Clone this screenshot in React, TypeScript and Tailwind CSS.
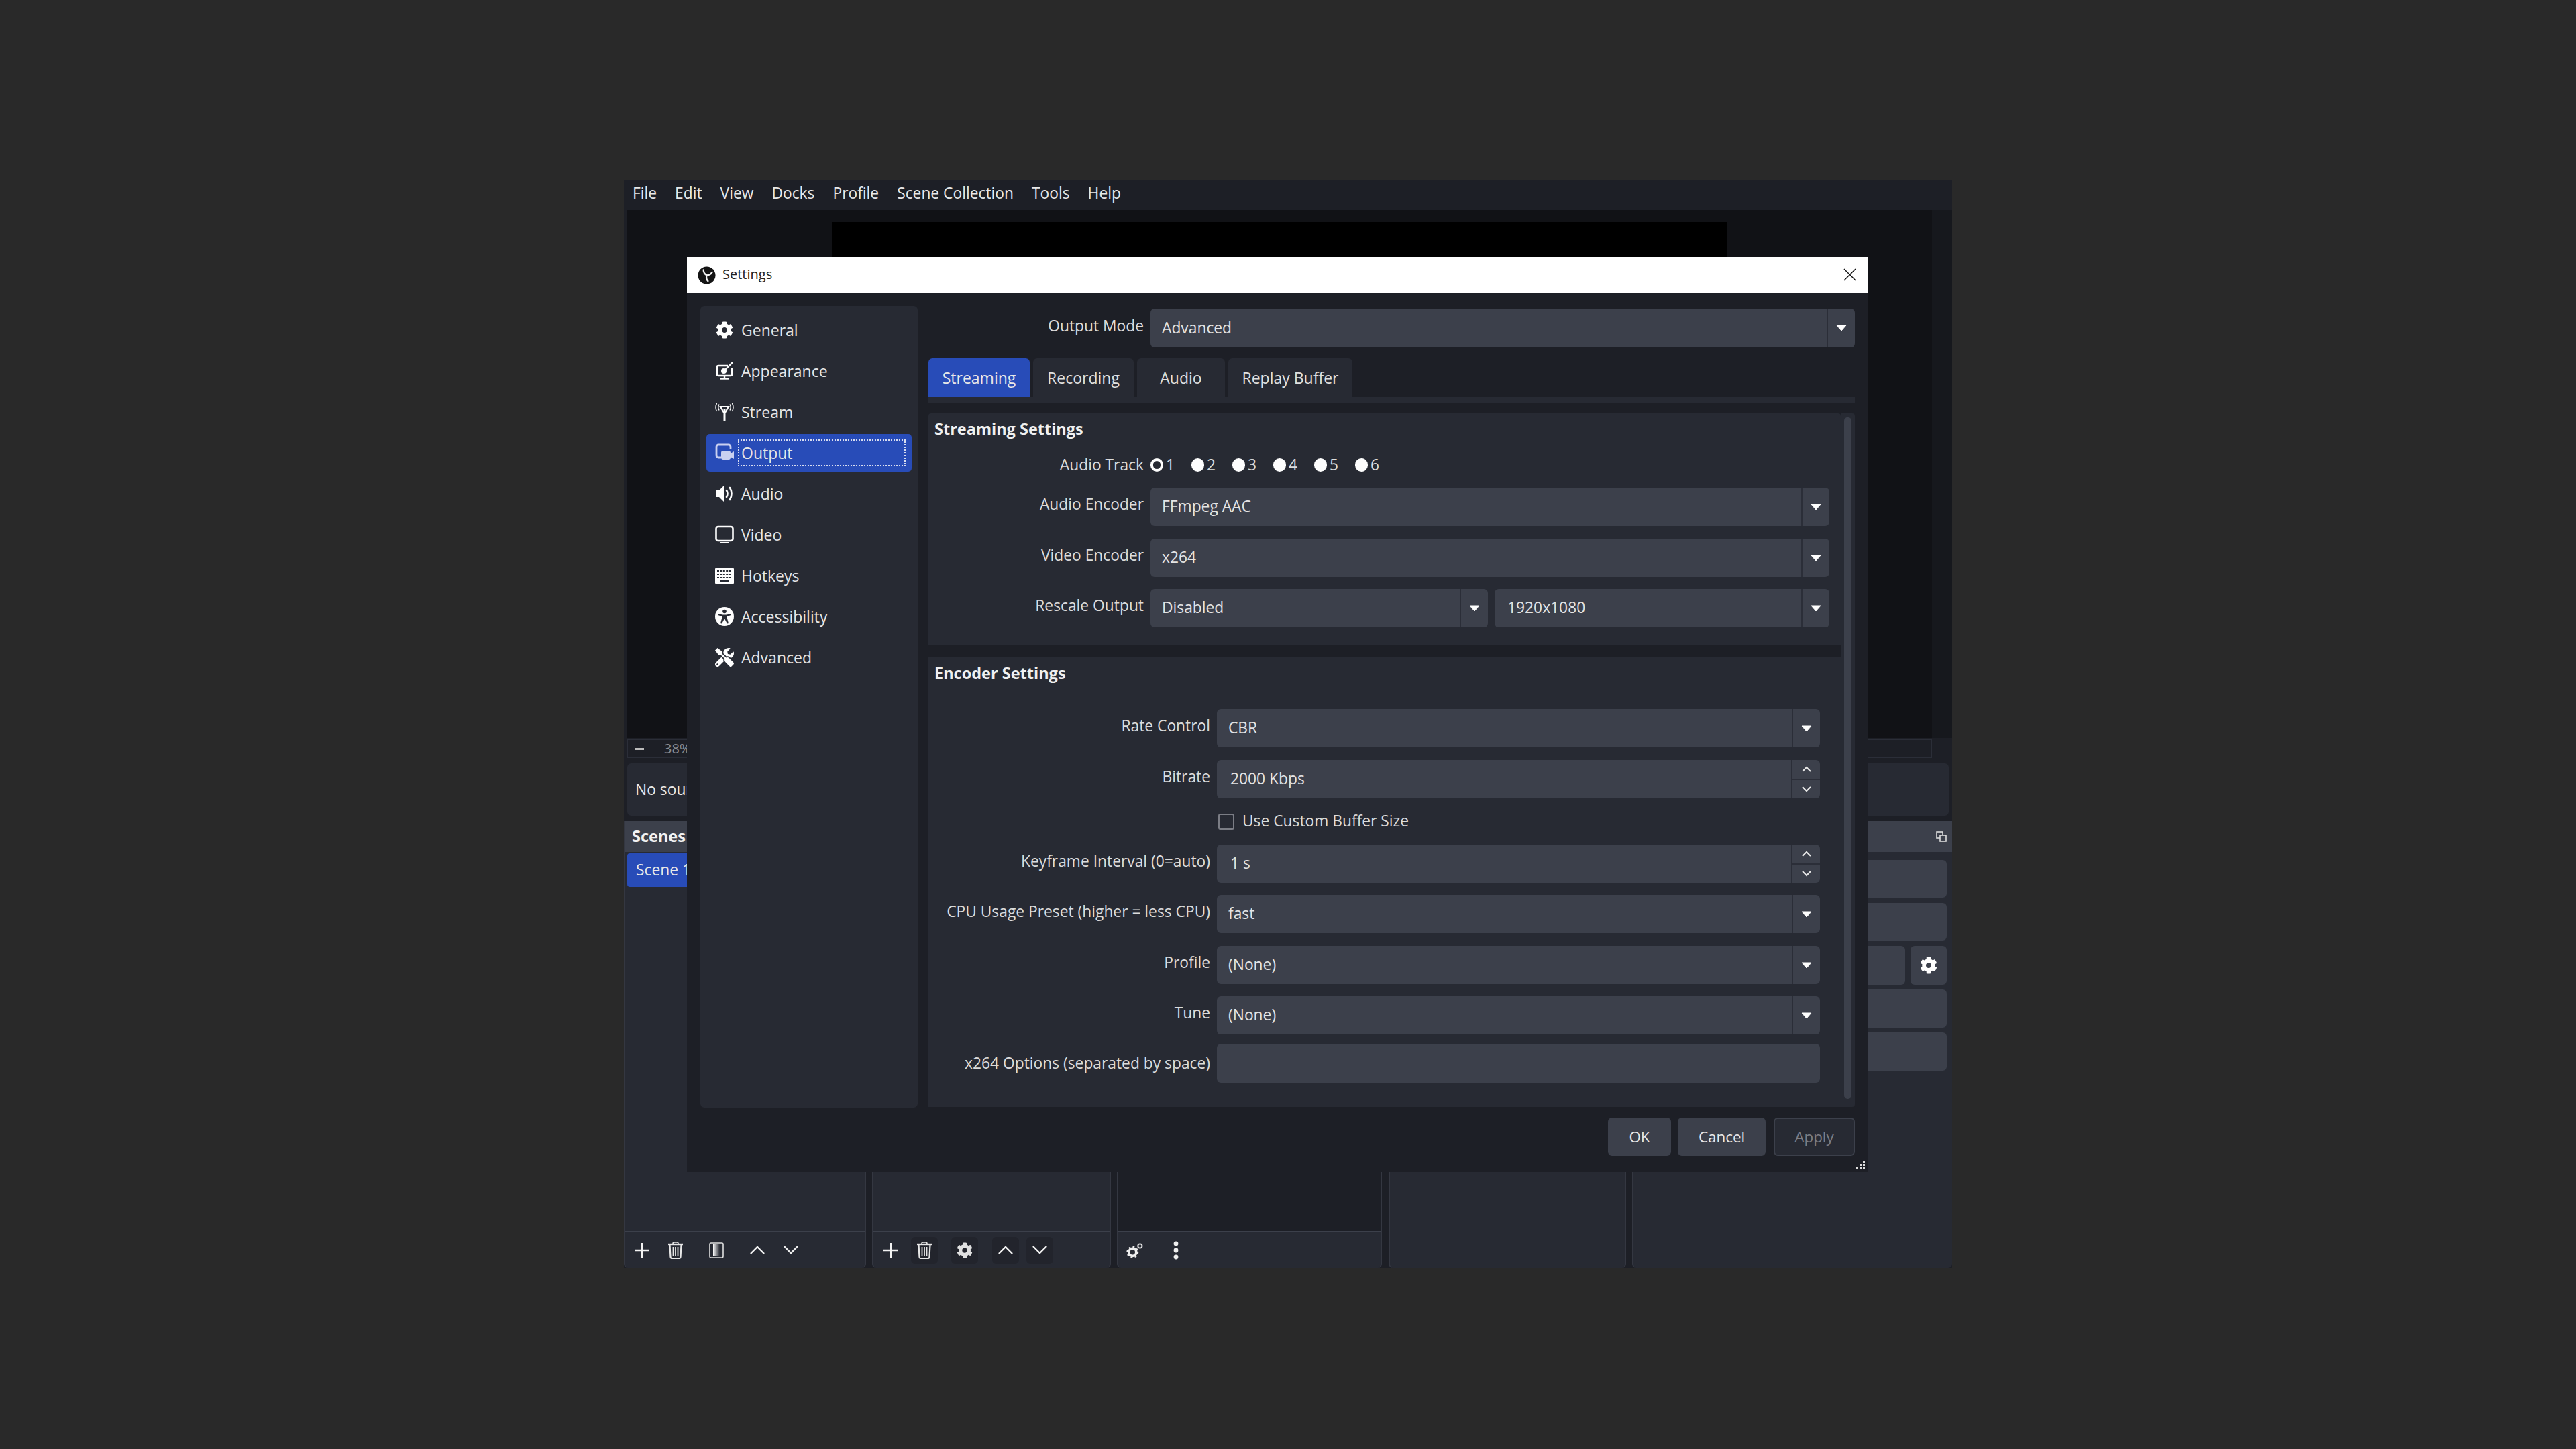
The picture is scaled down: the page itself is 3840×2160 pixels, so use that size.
import React from "react";
import { FaCog, FaTools } from "react-icons/fa";

const Tri = () => (
  <svg width="16" height="10" viewBox="0 0 16 10"><path d="M1 1 H15 L8 9 Z" fill="#fefefe" stroke="#fefefe" strokeLinejoin="round" strokeWidth="1" /></svg>
);

const Combo = ({ text, className = "", pad = "pl-[17px]" }: { text: string; className?: string; pad?: string }) => (
  <div className={`flex items-stretch bg-[#3c404b] rounded-[6px] ${className}`}>
    <div className={`flex-1 flex items-center text-[22.8px] text-[#e4e4e4] ${pad}`}>{text}</div>
    <div className="w-[42px] border-l-2 border-[#2b2e38] flex items-center justify-center"><Tri /></div>
  </div>
);

const Spin = ({ text }: { text: string }) => (
  <div className="flex items-stretch bg-[#3c404b] rounded-[6px] flex-1">
    <div className="flex-1 flex items-center pl-[20px] text-[22.8px] text-[#e4e4e4]">{text}</div>
    <div className="w-[43px] border-l-2 border-[#2b2e38] flex flex-col">
      <div className="flex-1 flex items-center justify-center border-b-2 border-[#2b2e38]">
        <svg width="16" height="10" viewBox="0 0 16 10"><path d="M2 8 L8 2 L14 8" fill="none" stroke="#e8e8e8" strokeWidth="2" /></svg>
      </div>
      <div className="flex-1 flex items-center justify-center">
        <svg width="16" height="10" viewBox="0 0 16 10"><path d="M2 2 L8 8 L14 2" fill="none" stroke="#e8e8e8" strokeWidth="2" /></svg>
      </div>
    </div>
  </div>
);

const Label = ({ text, className = "" }: { text: string; className?: string }) => (
  <div className={`text-right text-[22.8px] text-[#dcdcdc] whitespace-nowrap self-center -mt-[6px] ${className}`}>{text}</div>
);

const Row1 = ({ label, className = "", children }: { label: string; className?: string; children: React.ReactNode }) => (
  <div className={`flex h-[57px] gap-[10px] ${className}`}>
    <Label text={label} className="w-[321px]" />
    {children}
  </div>
);

const Row2 = ({ label, className = "", children }: { label: string; className?: string; children: React.ReactNode }) => (
  <div className={`flex h-[57px] gap-[10px] ${className}`}>
    <Label text={label} className="w-[420px]" />
    {children}
  </div>
);

const ic = "w-[28px] h-[28px] text-[#fefefe]";

const IconAppearance = () => (
  <svg viewBox="0 0 28 28" className={ic}>
    <path d="M19 6 H5 a2 2 0 0 0 -2 2 V19 a2 2 0 0 0 2 2 H23 a2 2 0 0 0 2 -2 V10" fill="none" stroke="currentColor" strokeWidth="2.6" />
    <path d="M26 1 L15 12" stroke="currentColor" strokeWidth="2.4" />
    <circle cx="13" cy="14" r="4" fill="currentColor" />
    <path d="M8 25.5 H20" stroke="currentColor" strokeWidth="2.4" />
    <path d="M14 21 V25" stroke="currentColor" strokeWidth="2.4" />
  </svg>
);
const IconStream = () => (
  <svg viewBox="0 0 28 28" className={ic}>
    <path d="M8 6 H20 L15.5 14 H12.5 Z" fill="none" stroke="currentColor" strokeWidth="2.2" />
    <path d="M14 9 V27" stroke="currentColor" strokeWidth="3" />
    <path d="M6 2.5 Q3.5 7 6 11.5 M2.5 1 Q-0.5 7 2.5 13 M22 2.5 Q24.5 7 22 11.5 M25.5 1 Q28.5 7 25.5 13" fill="none" stroke="currentColor" strokeWidth="1.5" />
  </svg>
);
const IconOutput = () => (
  <svg viewBox="0 0 28 28" className="w-[28px] h-[28px] text-[#c9d0f0]">
    <path d="M9 21 H5 a3 3 0 0 1 -3 -3 V5 a3 3 0 0 1 3 -3 H20 a3 3 0 0 1 3 3 V9" fill="none" stroke="currentColor" strokeWidth="2.8" />
    <rect x="9" y="11" width="14" height="13" rx="3" fill="currentColor" />
    <path d="M23 15 L28 12 V23 L23 20 Z" fill="currentColor" />
  </svg>
);
const IconAudio = () => (
  <svg viewBox="0 0 28 28" className={ic}>
    <path d="M1 9 H6 L13 2 V26 L6 19 H1 Z" fill="currentColor" />
    <path d="M17 9 Q20 14 17 19 M22 5 Q27 14 22 23" fill="none" stroke="currentColor" strokeWidth="2.6" strokeLinecap="round" />
  </svg>
);
const IconVideo = () => (
  <svg viewBox="0 0 28 28" className={ic}>
    <rect x="1.5" y="2" width="25" height="21" rx="3" fill="none" stroke="currentColor" strokeWidth="2.6" />
    <path d="M8 26 H20" stroke="currentColor" strokeWidth="2" />
  </svg>
);
const IconHotkeys = () => (
  <svg viewBox="0 0 28 28" className={ic}>
    <rect x="0" y="3" width="28" height="23" rx="1" fill="currentColor" />
    <path d="M3 7 H25 M3 12 H25 M3 17 H25" stroke="#272a33" strokeWidth="2.2" strokeDasharray="3 1.4" />
    <path d="M7 22 H21" stroke="#272a33" strokeWidth="2.2" />
  </svg>
);
const IconAccess = () => (
  <svg viewBox="0 0 28 28" className={ic}>
    <circle cx="14" cy="14" r="14" fill="currentColor" />
    <circle cx="14" cy="6.5" r="2.8" fill="#272a33" />
    <path d="M5 10 L11 11.5 H17 L23 10 L23.5 12 L18 14 V17 L20 24 L18 24.5 L14.5 18 H13.5 L10 24.5 L8 24 L10 17 V14 L4.5 12 Z" fill="#272a33" />
  </svg>
);
const Logo = () => (
  <svg viewBox="0 0 28 28" className="w-[27px] h-[27px]">
    <circle cx="14" cy="14" r="13.5" fill="#141414" />
    <g fill="none" stroke="#f4f4f4" strokeWidth="2.4" strokeLinecap="round">
      <path d="M14 14 Q9 11 9 5.5" />
      <path d="M14 14 Q19.5 14 22.5 9" />
      <path d="M14 14 Q12.5 19.5 16 23" />
    </g>
  </svg>
);

const navItems: [string, React.ReactNode][] = [
  ["General", <FaCog className="w-[26px] h-[26px] text-[#fefefe]" />],
  ["Appearance", <IconAppearance />],
  ["Stream", <IconStream />],
  ["Output", <IconOutput />],
  ["Audio", <IconAudio />],
  ["Video", <IconVideo />],
  ["Hotkeys", <IconHotkeys />],
  ["Accessibility", <IconAccess />],
  ["Advanced", <FaTools className="w-[28px] h-[28px] text-[#fefefe]" />],
];

const Trash = () => (
  <svg viewBox="0 0 24 26" className="w-[24px] h-[26px]" fill="none" stroke="#e6e6e6">
    <path d="M1 4 H23" strokeWidth="2.4" />
    <path d="M8 3 Q8 1 10 1 H14 Q16 1 16 3" strokeWidth="1.6" />
    <path d="M3.5 5 L4.5 23 Q4.6 25 6.5 25 H17.5 Q19.4 25 19.5 23 L20.5 5" strokeWidth="2.2" />
    <path d="M8.5 8 V21 M12 8 V21 M15.5 8 V21" strokeWidth="1.8" />
  </svg>
);
const Plus = () => (
  <svg viewBox="0 0 22 22" className="w-[22px] h-[22px]"><path d="M11 0 V22 M0 11 H22" stroke="#f2f2f2" strokeWidth="2.6" /></svg>
);
const Up = () => (
  <svg viewBox="0 0 24 14" className="w-[22px] h-[13px]"><path d="M1 13 L12 2 L23 13" fill="none" stroke="#f0f0f0" strokeWidth="2.6" /></svg>
);
const Down = () => (
  <svg viewBox="0 0 24 14" className="w-[22px] h-[13px]"><path d="M1 1 L12 12 L23 1" fill="none" stroke="#f0f0f0" strokeWidth="2.6" /></svg>
);
const Tb = ({ dark = false, className = "", children }: { dark?: boolean; className?: string; children: React.ReactNode }) => (
  <div className={`w-[40px] h-[40px] flex items-center justify-center rounded-[6px] ${dark ? "bg-[#22242c]" : ""} ${className}`}>{children}</div>
);

const DockShell = ({ className, dark = false, line = true, children, top }: { className: string; dark?: boolean; line?: boolean; children: React.ReactNode; top?: React.ReactNode }) => (
  <div className={`flex flex-col bg-[#272a33] rounded-b-[6px] border-x-2 border-[#343741] ${className}`}>
    <div className={`flex-1 flex flex-col ${dark ? "bg-[#1d1f26]" : ""}`}>{top}</div>
    <div className={`h-[2px] ${line ? "bg-[#3c404b]" : ""}`} />
    <div className="h-[53px] flex items-center">{children}</div>
  </div>
);

export default function App() {
  const menu = ["File", "Edit", "View", "Docks", "Profile", "Scene Collection", "Tools", "Help"];
  return (
    <div className="w-[3840px] h-[2160px] bg-[#292929] pt-[269px] pl-[930px] font-['Open_Sans',sans-serif]">
      <div className="relative w-[1980px] h-[1621px] bg-[#1d1f26] flex flex-col">
        <div className="h-[44px] flex items-center pl-[13px] gap-[27px] text-[22.8px] text-[#e8e8e8] pb-[5px]">
          {menu.map((m) => <span key={m}>{m}</span>)}
        </div>
        <div className="flex-1 flex flex-col">
          <div className="h-[787px] pl-[5px] flex">
            <div className="w-[1945px] bg-[#111216] flex justify-center pt-[18px]">
              <div className="w-[1335px] h-[750px] bg-black" />
            </div>
            <div className="flex-1 bg-[#16181d]" />
          </div>
          <div className="h-[28px] mt-[2px] ml-[5px] w-[1945px] border border-[#2b2e38] flex items-center pl-[10px] gap-[30px] text-[20px] text-[#8b8d93]">
            <div className="w-[14px] h-[3px] bg-[#bbb]" />
            <span>38%</span>
          </div>
          <div className="h-[78px] mt-[8px] ml-[5px] mr-[5px] bg-[#272a33] rounded-[6px] flex items-center pl-[12px] text-[22.8px] text-[#e8e8e8]">No source selected</div>
          <div className="flex-1 flex mt-[8px]">
            <DockShell
              className="w-[361px]"
              top={
                <>
                  <div className="h-[46px] bg-[#3c404b] flex items-center pl-[10px] text-[23.5px] font-bold text-[#f2f2f2]">Scenes</div>
                  <div className="h-[50px] mt-[2px] ml-[3px] mr-[5px] bg-[#284cb8] rounded-[4px] flex items-center pl-[13px] text-[22.8px] text-[#e8e8e8]">Scene 1</div>
                </>
              }
            >
              <Tb className="ml-[5px]"><Plus /></Tb>
              <Tb className="ml-[10px]"><Trash /></Tb>
              <Tb className="ml-[21px]">
                <svg viewBox="0 0 22 24" className="w-[22px] h-[24px]">
                  <defs><linearGradient id="g1"><stop offset="0" stopColor="#fff" /><stop offset="1" stopColor="#272a33" /></linearGradient></defs>
                  <rect x="1" y="1" width="20" height="22" rx="2" fill="#272a33" stroke="#e0e0e0" strokeWidth="1.6" />
                  <rect x="6" y="3" width="10" height="18" fill="url(#g1)" />
                </svg>
              </Tb>
              <Tb className="ml-[21px]"><Up /></Tb>
              <Tb className="ml-[10px]"><Down /></Tb>
            </DockShell>
            <div className="w-[9px]" />
            <DockShell className="w-[356px]">
              <Tb className="ml-[6px]"><Plus /></Tb>
              <Tb dark className="ml-[10px]"><Trash /></Tb>
              <Tb dark className="ml-[20px]"><FaCog className="w-[24px] h-[24px] text-[#e0e0e0]" /></Tb>
              <Tb dark className="ml-[21px]"><Up /></Tb>
              <Tb dark className="ml-[11px]"><Down /></Tb>
            </DockShell>
            <div className="w-[9px]" />
            <DockShell className="w-[395px]" dark>
              <Tb className="ml-[5px]">
                <svg viewBox="0 0 28 26" className="w-[26px] h-[24px]">
                  <g transform="translate(10 16)"><circle r="6" fill="none" stroke="#eee" strokeWidth="4" /><circle r="8.5" fill="none" stroke="#eee" strokeWidth="2.4" strokeDasharray="3 3.67" /></g>
                  <circle cx="22" cy="6" r="3.4" fill="none" stroke="#eee" strokeWidth="2" />
                </svg>
              </Tb>
              <Tb className="ml-[21px]">
                <svg viewBox="0 0 8 28" className="w-[8px] h-[28px]"><circle cx="4" cy="4" r="3.4" fill="#eee" /><circle cx="4" cy="14" r="3.4" fill="#eee" /><circle cx="4" cy="24" r="3.4" fill="#eee" /></svg>
              </Tb>
            </DockShell>
            <div className="w-[10px]" />
            <DockShell className="w-[354px]" line={false}><span /></DockShell>
            <div className="w-[9px]" />
            <DockShell
              className="flex-1 border-r-0"
              line={false}
              top={
                <>
                  <div className="h-[46px] bg-[#3c404b] flex items-center justify-end pr-[8px]">
                    <svg viewBox="0 0 16 16" className="w-[16px] h-[16px]" fill="none" stroke="#ddd" strokeWidth="1.6"><rect x="1" y="1" width="9" height="9" /><rect x="6" y="6" width="9" height="9" fill="#3c404b" /></svg>
                  </div>
                  <div className="h-[56px] mt-[12px] mr-[8px] bg-[#3c404b] rounded-[6px]" />
                  <div className="h-[56px] mt-[8px] mr-[8px] bg-[#3c404b] rounded-[6px]" />
                  <div className="flex mt-[8px] mr-[8px] gap-[8px] h-[58px]">
                    <div className="flex-1 bg-[#3c404b] rounded-[6px]" />
                    <div className="w-[54px] bg-[#3c404b] rounded-[6px] flex items-center justify-center"><FaCog className="w-[26px] h-[26px] text-[#fefefe]" /></div>
                  </div>
                  <div className="h-[57px] mt-[7px] mr-[8px] bg-[#3c404b] rounded-[6px]" />
                  <div className="h-[57px] mt-[7px] mr-[8px] bg-[#3c404b] rounded-[6px]" />
                </>
              }
            >
              <span />
            </DockShell>
          </div>
        </div>

        {/* Settings dialog */}
        <div className="absolute left-[94px] top-[114px] w-[1761px] h-[1364px] flex flex-col bg-[#1d1f26]">
          <div className="h-[54px] bg-white flex items-center pl-[16px] pr-[18px]">
            <Logo />
            <span className="ml-[10px] text-[20px] text-[#222] -mt-[2px]">Settings</span>
            <svg viewBox="0 0 20 20" className="w-[19px] h-[19px] ml-auto -mt-[2px]"><path d="M1 1 L19 19 M19 1 L1 19" stroke="#111" strokeWidth="1.5" /></svg>
          </div>
          <div className="flex-1 flex pl-[20px] pt-[19px] gap-[16px] relative">
            <div className="w-[324px] h-[1195px] bg-[#272a33] rounded-[6px] pt-[8px] px-[9px]">
              {navItems.map(([name, icon]) => (
                <div key={name} className={`h-[56px] mb-[5px] flex items-center rounded-[5px] relative ${name === "Output" ? "bg-[#284cb8]" : ""}`}>
                  <div className="w-[52px] flex justify-center pl-[2px] shrink-0">{icon}</div>
                  <span className="text-[23px] text-[#e6e6e6]">{name}</span>
                  {name === "Output" && <div className="absolute left-[47px] right-[9px] top-[8px] bottom-[8px] border-2 border-dotted border-[#d8ddf0]" />}
                </div>
              ))}
            </div>
            <div className="w-[1381px] flex flex-col">
              <div className="h-[58px] mt-[4px] flex gap-[10px]">
                <Label text="Output Mode" className="w-[321px]" />
                <Combo text="Advanced" className="flex-1" />
              </div>
              <div className="h-[58px] mt-[16px] flex gap-[5px] text-[23px]">
                <div className="w-[151px] bg-[#284cb8] rounded-t-[6px] flex items-center justify-center pt-[1px] text-[#e8e8e8]">Streaming</div>
                <div className="w-[150px] bg-[#272a33] rounded-t-[6px] flex items-center justify-center pt-[1px] text-[#e0e0e0]">Recording</div>
                <div className="w-[131px] bg-[#272a33] rounded-t-[6px] flex items-center justify-center pt-[1px] text-[#e0e0e0]">Audio</div>
                <div className="w-[185px] bg-[#272a33] rounded-t-[6px] h-[66px] flex items-center justify-center pb-[7px] text-[#e0e0e0]">Replay Buffer</div>
              </div>
              <div className="h-[8px] bg-[#272a33]" />
              <div className="h-[1034px] mt-[16px] bg-[#272a33] flex rounded-[4px]">
                <div className="w-[1360px] flex flex-col gap-[18px] bg-[#1d1f26]">
                  <div className="h-[345px] bg-[#272a33] rounded-t-[4px] pt-[9px]">
                    <div className="h-[30px] pl-[9px] text-[23.5px] font-bold text-[#f0f0f0] flex items-center">Streaming Settings</div>
                    <div className="flex h-[30px] mt-[23px] gap-[10px]">
                      <div className="w-[321px] text-right text-[22.8px] text-[#dcdcdc] self-center">Audio Track</div>
                      <div className="flex">
                        {["1", "2", "3", "4", "5", "6"].map((n, i) => (
                          <div key={n} className="w-[61px] flex items-center gap-[4px] text-[22.8px] text-[#dcdcdc]">
                            <div className={`w-[19px] h-[20px] rounded-full ${i === 0 ? "border-[4px] border-[#fefefe]" : "bg-[#fefefe]"}`} />
                            {n}
                          </div>
                        ))}
                      </div>
                    </div>
                    <Row1 label="Audio Encoder" className="mt-[19px]"><Combo text="FFmpeg AAC" className="w-[1012px]" /></Row1>
                    <Row1 label="Video Encoder" className="mt-[19px]"><Combo text="x264" className="w-[1012px]" /></Row1>
                    <Row1 label="Rescale Output" className="mt-[18px]">
                      <Combo text="Disabled" className="w-[503px]" />
                      <Combo text="1920x1080" className="w-[499px]" pad="pl-[19px]" />
                    </Row1>
                  </div>
                  <div className="flex-1 bg-[#272a33] pt-[10px]">
                    <div className="h-[30px] pl-[9px] text-[23.5px] font-bold text-[#f0f0f0] flex items-center">Encoder Settings</div>
                    <Row2 label="Rate Control" className="mt-[38px]"><Combo text="CBR" className="w-[899px]" /></Row2>
                    <Row2 label="Bitrate" className="mt-[19px]"><div className="w-[899px] flex"><Spin text="2000 Kbps" /></div></Row2>
                    <div className="h-[69px] pl-[430px] flex items-center gap-[12px] text-[22.8px] text-[#dcdcdc]">
                      <div className="w-[24px] h-[24px] border-2 border-[#7b7d85] rounded-[3px] ml-[2px]" />
                      Use Custom Buffer Size
                    </div>
                    <Row2 label="Keyframe Interval (0=auto)"><div className="w-[899px] flex"><Spin text="1 s" /></div></Row2>
                    <Row2 label="CPU Usage Preset (higher = less CPU)" className="mt-[18px]"><Combo text="fast" className="w-[899px]" /></Row2>
                    <Row2 label="Profile" className="mt-[19px]"><Combo text="(None)" className="w-[899px]" /></Row2>
                    <Row2 label="Tune" className="mt-[18px]"><Combo text="(None)" className="w-[899px]" /></Row2>
                    <div className="flex h-[58px] gap-[10px] mt-[14px]">
                      <div className="w-[420px] text-right text-[22.8px] text-[#dcdcdc] self-center">x264 Options (separated by space)</div>
                      <div className="w-[899px] bg-[#3c404b] rounded-[6px]" />
                    </div>
                  </div>
                </div>
                <div className="flex-1 pt-[6px] pb-[12px] pl-[5px] pr-[5px]">
                  <div className="w-[11px] h-full bg-[#3c404b] rounded-[5px]" />
                </div>
              </div>
              <div className="flex justify-end gap-[10px] mt-[16px] text-[22.4px]">
                <div className="w-[94px] h-[57px] bg-[#3c404b] rounded-[6px] flex items-center justify-center text-[#e8e8e8]">OK</div>
                <div className="w-[131px] h-[57px] bg-[#3c404b] rounded-[6px] flex items-center justify-center text-[#e8e8e8]">Cancel</div>
                <div className="w-[121px] h-[57px] ml-[2px] border-2 border-[#3c404b] bg-[#272a33] rounded-[6px] flex items-center justify-center text-[#7c7e85]">Apply</div>
              </div>
            </div>
            <svg viewBox="0 0 14 14" className="absolute right-[5px] bottom-[4px] w-[14px] h-[14px]" fill="#ddd">
              <rect x="11" y="1" width="3" height="3" /><rect x="11" y="6" width="3" height="3" /><rect x="6" y="6" width="3" height="3" /><rect x="11" y="11" width="3" height="3" /><rect x="6" y="11" width="3" height="3" /><rect x="1" y="11" width="3" height="3" />
            </svg>
          </div>
        </div>
      </div>
    </div>
  );
}
